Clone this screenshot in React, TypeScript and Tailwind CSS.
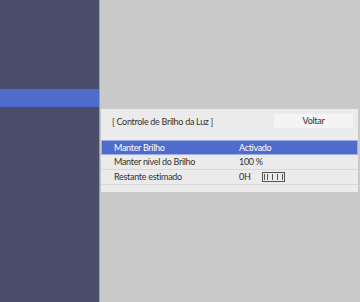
export default function App() {
  const rows = [
    { label: 'Manter Brilho', value: 'Activado', active: true },
    { label: 'Manter nível do Brilho', value: '100 %' },
    { label: 'Restante estimado', value: '0H', meter: true },
  ];

  return (
    <div className="flex h-[302px] w-[360px] bg-[#c9c9c9] font-['Lato',sans-serif] tracking-[-0.3px]">
      {/* Left menu */}
      <div className="flex w-[100px] flex-col border-r border-[#9a9cab] bg-[#4b4e6a]">
        <div className="h-[89px]" />
        <div className="h-[18px] bg-[#4f6bcb]" />
      </div>

      {/* Right side */}
      <div className="flex flex-1 flex-col pl-[1px] pr-[2px] pt-[109px]">
        <div className="bg-[#ebebeb] pb-[7px]">
          <div className="flex h-[31px] items-start justify-between pl-[11px] pr-[5px] pt-[5px]">
            <span className="pt-[1px] text-[9px] leading-[13px] text-[#333]">[ Controle de Brilho da Luz ]</span>
            <button className="h-[14px] w-[79px] bg-[#f4f4f4] text-[9px] leading-[14px] text-[#333]">Voltar</button>
          </div>
          {rows.map((r) => (
            <div
              key={r.label}
              className={
                r.active
                  ? 'flex h-[15px] items-center border border-[#9fb0e4] bg-[#4f6bcb] text-[9px] text-white'
                  : 'flex h-[15px] items-center border-b border-[#d9d9d9] text-[9px] text-[#333]'
              }
            >
              <span className={r.active ? 'w-[137px] pl-[12px]' : 'w-[138px] pl-[13px]'}>{r.label}</span>
              <span className="flex items-center gap-[11px]">
                {r.value}
                {r.meter && (
                  <span className="flex h-[10px] w-[23px] gap-[1px] border border-[#555] p-[1px]">
                    <span className="flex-1 border-x border-[#555]" />
                    <span className="flex-1 border-r border-[#555]" />
                    <span className="flex-1 border-r border-[#555]" />
                    <span className="flex-1 border-r border-[#555]" />
                  </span>
                )}
              </span>
            </div>
          ))}
        </div>
      </div>
    </div>
  );
}
